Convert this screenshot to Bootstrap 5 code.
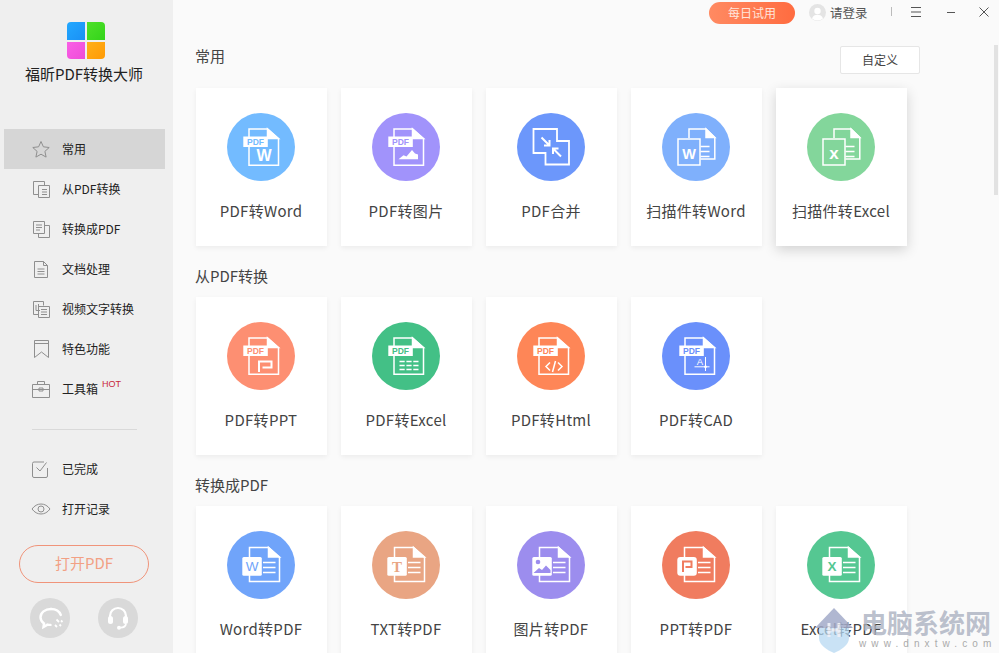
<!DOCTYPE html>
<html lang="zh-CN">
<head>
    <meta charset="UTF-8">
    <meta name="viewport" content="width=device-width, initial-scale=1.0">
    <link rel="stylesheet" href="https://cdn.jsdelivr.net/npm/bootstrap@5.3.3/dist/css/bootstrap.min.css">
    <title>福昕PDF转换大师</title>

    <style>
        html, body {
            height: 653px;
            overflow: hidden;
        }
        body {
            background: #fafafa;
            color: #333;
            font-family: "Noto Sans CJK SC", "Liberation Sans", sans-serif;
            position: relative;
        }
        /* sidebar */
        .side-panel {
            width: 173px;
            height: 653px;
            background: #efefef;
            flex: none;
        }
        .logo-grid {
            width: 38px;
            height: 37px;
            margin: 22px 0 0 67px;
            display: grid;
            grid-template-columns: 1fr 1fr;
            gap: 2px;
            border-radius: 4px;
            overflow: hidden;
        }
        .logo-a { background: linear-gradient(135deg, #22a8ff, #1a90f5); }
        .logo-b { background: linear-gradient(135deg, #4fe02a, #33d41a); }
        .logo-c { background: linear-gradient(135deg, #fa5fe6, #ee4cd8); }
        .logo-d { background: linear-gradient(135deg, #ffb01a, #ff9a05); }
        .app-title {
            font-size: 15px;
            line-height: 20px;
            margin-top: 5px;
            padding-right: 5px;
            color: #222;
            text-align: center;
        }
        .side-nav {
            margin-top: 45px;
            padding: 0 8px 0 4px;
        }
        .side-nav .nav-link {
            height: 40px;
            padding: 0 0 0 27px;
            display: flex;
            align-items: center;
            gap: 11px;
            color: #222;
            font-size: 12px;
            position: relative;
        }
        .side-nav .nav-link.active {
            background: #d6d6d6;
        }
        .side-icon {
            width: 20px;
            height: 20px;
            flex: none;
            fill: none;
            stroke: #8f8f8f;
            stroke-width: 1;
        }
        .hot-tag {
            position: absolute;
            left: 98px;
            top: 10px;
            font-size: 9px;
            line-height: 10px;
            color: #c8283c;
            font-family: "Liberation Sans", sans-serif;
        }
        .side-rule {
            margin: 20px 36px 19px 32px;
            border-top: 1px solid #d9d9d9;
            opacity: 1;
        }
        .open-btn {
            display: block;
            width: 130px;
            height: 38px;
            margin: 16px 0 0 19px;
            padding: 0 0 3px;
            border: 1px solid #f0947a;
            border-radius: 19px;
            background: transparent;
            color: #f2a084;
            font-size: 15px;
            line-height: 32px;
        }
        .round-tool {
            width: 40px;
            height: 40px;
            border-radius: 50%;
            background: #d9d9d9;
        }
        .round-row {
            margin: 15px 0 0 30px;
            gap: 28px;
        }
        /* main */
        .main-area {
            flex: 1;
            min-width: 0;
            padding-left: 22px;
        }
        .top-bar {
            height: 26px;
            padding-top: 2px;
            color: #555;
            font-size: 12.500px;
        }
        .trial-pill {
            width: 86px;
            height: 22px;
            margin-left: 514px;
            padding: 0;
            border: 0;
            border-radius: 11px;
            background: linear-gradient(90deg, #ff8a62, #ff6c40);
            color: #ffe6dc;
            font-size: 12px;
            line-height: 22px;
        }
        .avatar-dot {
            width: 17px;
            height: 17px;
            margin: 2px 0 0 14px;
        }
        .login-text {
            margin-left: 4px;
            width: 39px;
            line-height: 22px;
            white-space: nowrap;
        }
        .win-icon {
            width: 12px;
            height: 12px;
            margin-top: 4px;
            fill: none;
            stroke: #555;
            stroke-width: 1;
        }
        .win-menu { margin-left: 18px; }
        .win-min { margin-left: 23px; }
        .win-close { margin-left: 21px; }
        .bar-sep {
            width: 1px;
            height: 9px;
            margin: 5px 0 0 22px;
            background: #bbb;
        }
        .section-title {
            font-size: 15px;
            line-height: 20px;
            color: #444;
            margin: 20px 0 11px;
            font-weight: 400;
        }
        .first-head {
            height: 28px;
            margin-top: 20px;
            margin-bottom: 14px;
            width: 725px;
        }
        .first-head .section-title {
            margin: 0;
        }
        .custom-btn {
            width: 80px;
            height: 28px;
            padding: 0;
            background: #fff;
            border: 1px solid #e6e6e6;
            border-radius: 2px;
            color: #444;
            font-size: 12px;
            line-height: 26px;
        }
        .tool-row {
            gap: 14px;
            margin-left: 1px;
        }
        .tool-card {
            width: 131px;
            height: 158px;
            flex: none;
            padding-top: 25px;
            border: 0;
            border-radius: 0;
            background: #fff;
            box-shadow: 0 2px 5px rgba(0, 0, 0, .06);
            align-items: center;
        }
        .tool-card.hovered {
            box-shadow: 0 4px 12px rgba(0, 0, 0, .16);
        }
        .tool-disc {
            width: 68px;
            height: 68px;
            margin-right: 1px;
            border-radius: 50%;
            background: currentColor;
        }
        .tool-disc svg {
            display: block;
            fill: none;
            stroke: #fff;
            stroke-width: 1.5;
        }
        .tool-disc text {
            font-family: "Liberation Sans", sans-serif;
            font-weight: 700;
            stroke: none;
        }
        .tool-name {
            margin-top: 18px;
            padding-right: 1px;
            font-size: 15px;
            line-height: 24px;
            letter-spacing: .3px;
            color: #444;
            white-space: nowrap;
        }
        .c-a { color: #73bbff; }
        .c-b { color: #a193fb; }
        .c-c { color: #6c97fb; }
        .c-d { color: #7fb0fc; }
        .c-e { color: #83d69b; }
        .c-f { color: #fd8f72; }
        .c-g { color: #43c086; }
        .c-h { color: #fe8657; }
        .c-i { color: #6a90fb; }
        .c-j { color: #70a4fa; }
        .c-k { color: #e9a583; }
        .c-l { color: #9c8dee; }
        .c-m { color: #f07c5f; }
        .c-n { color: #55c792; }
        /* scrollbar and watermark lie over the content */
        .fake-scroll {
            position: absolute;
            left: 994px;
            top: 45px;
            width: 4px;
            height: 150px;
            background: #e2e2e2;
        }
        .wm-logo {
            position: absolute;
            left: 814px;
            top: 607px;
            opacity: .85;
        }
        .wm-name {
            position: absolute;
            left: 861px;
            top: 606px;
            font-size: 26px;
            line-height: 32px;
            font-weight: 700;
            color: rgba(170, 176, 192, .8);
            white-space: nowrap;
        }
        .wm-url {
            position: absolute;
            left: 859px;
            top: 637px;
            font-family: "Liberation Sans", sans-serif;
            font-size: 10px;
            line-height: 14px;
            letter-spacing: 5.100px;
            color: #aaa;
            white-space: nowrap;
        }
    </style>
</head>
<body>
    <!-- shared icon parts -->
    <svg width="0" height="0" class="position-absolute">
        <symbol id="doc-pdf" viewBox="0 0 68 68">
            <path d="M22 30V16h18.500l11 10v26.200H22V34" />
            <path d="M40.500 16v9.500h11z" fill="#fff" />
            <rect x="16.300" y="23.500" width="24.500" height="10.500" fill="#fff" stroke="none" />
        </symbol>
        <symbol id="doc-lines" viewBox="0 0 68 68">
            <path d="M22.500 26V16.500h19l11 10v24h-30V44" />
            <path d="M41.500 16.500v9.500h11z" fill="#fff" />
            <path d="M36 31.500h12.500M36 36.500h12.500M36 41.500h12.500" />
        </symbol>
        <symbol id="doc-scan" viewBox="0 0 68 68">
            <path d="M27 25V16h17l8.800 8.500V46H38.500" />
            <path d="M44 16v8.500h8.800z" fill="#fff" />
            <path d="M38.500 33.500h9M38.500 38.500h9M38.500 43.500h9" />
            <path d="M16 26h22v26H16z" />
        </symbol>
    </svg>

    <div class="d-flex">
        <aside class="side-panel">
            <div class="logo-grid">
                <span class="logo-a"></span><span class="logo-b"></span>
                <span class="logo-c"></span><span class="logo-d"></span>
            </div>
            <div class="app-title">福昕PDF转换大师</div>

            <nav class="nav flex-column side-nav">
                <a class="nav-link active" href="#">
                    <svg class="side-icon" viewBox="0 0 20 20"><path d="M10 2.500l2.400 5.300 5.800.7-4.300 3.900 1.200 5.700-5.100-2.900-5.100 2.900 1.200-5.700-4.300-3.900 5.800-.7z" /></svg>
                    常用
                </a>
                <a class="nav-link" href="#">
                    <svg class="side-icon" viewBox="0 0 20 20"><path d="M7 15.500H2.500v-13h11v4M7.500 6.500h11v12h-11zM11 10.500h5M11 13h5M11 15.500h5" /></svg>
                    从PDF转换
                </a>
                <a class="nav-link" href="#">
                    <svg class="side-icon" viewBox="0 0 20 20"><path d="M2.500 2.500h11v12h-11zM5 6h6M5 8.500h6M5 11h4M13.500 6.500h5v12h-11v-4" /></svg>
                    转换成PDF
                </a>
                <a class="nav-link" href="#">
                    <svg class="side-icon" viewBox="0 0 20 20"><path d="M3.500 2.500h9l4 4v12h-13zM12.500 2.500v4h4M6.500 10h7M6.500 12.500h7M6.500 15h7" /></svg>
                    文档处理
                </a>
                <a class="nav-link" href="#">
                    <svg class="side-icon" viewBox="0 0 20 20"><path d="M7.500 15.500h-5v-13h10v4M7.500 7.500h11v11h-11zM5 6v5.500h4M7.500 5v3M10 10.500h6M10 13h6M10 15.500h6" /></svg>
                    视频文字转换
                </a>
                <a class="nav-link" href="#">
                    <svg class="side-icon" viewBox="0 0 20 20"><path d="M3.500 1.500h14v17L10.500 13l-7 5.500zM3.500 4.500h14" /></svg>
                    特色功能
                </a>
                <a class="nav-link" href="#">
                    <svg class="side-icon" viewBox="0 0 20 20"><path d="M1.500 5.500h17v13h-17zM1.500 10.500h17M6.500 5.500v-3h7v3M8 9h4v3H8z" /></svg>
                    工具箱
                    <span class="hot-tag">HOT</span>
                </a>
            </nav>

            <hr class="side-rule">

            <nav class="nav flex-column side-nav mt-0">
                <a class="nav-link" href="#">
                    <svg class="side-icon" viewBox="0 0 20 20"><path d="M16.500 9v8a1.500 1.500 0 0 1-1.500 1.500H3A1.500 1.500 0 0 1 1.500 17V4.500A1.500 1.500 0 0 1 3 3h10M5.500 8.500l3.500 3.500L15.500 3.500" /></svg>
                    已完成
                </a>
                <a class="nav-link" href="#">
                    <svg class="side-icon" viewBox="0 0 20 20"><path d="M1 10c2.500-3.400 5.500-5 9-5s6.500 1.600 9 5c-2.500 3.400-5.500 5-9 5s-6.500-1.600-9-5z" /><circle cx="10" cy="10" r="3" /></svg>
                    打开记录
                </a>
            </nav>

            <button type="button" class="btn open-btn">打开PDF</button>

            <div class="d-flex round-row">
                <div class="round-tool">
                    <svg width="40" height="40" viewBox="0 0 40 40"><path d="M21 11c-6 0-10.500 3.500-10.500 8.200 0 2.600 1.400 4.800 3.500 6.200l-.5 3.600 4-2.400c1 .2 2 .3 3 .3" fill="none" stroke="#fff" stroke-width="2.400" stroke-linecap="round" /><path d="M21 11c5 0 8.500 2.600 9.800 6" fill="none" stroke="#fff" stroke-width="2.400" stroke-linecap="round" /><path d="M26.500 21.500l2.500 2.500M31 22.500l1.500 1.500M25 27l2 2M29.500 26.500l1.500 1.500" stroke="#fff" stroke-width="1.800" /></svg>
                </div>
                <div class="round-tool">
                    <svg width="40" height="40" viewBox="0 0 40 40"><path d="M12 21v-3a8 8 0 0 1 16 0v3" fill="none" stroke="#fff" stroke-width="2.200" /><rect x="10" y="18" width="5" height="8" rx="2.500" fill="#fff" /><rect x="25" y="18" width="5" height="8" rx="2.500" fill="#fff" /><path d="M28 26c-.5 2.500-2.500 3.500-5.500 3.700" fill="none" stroke="#fff" stroke-width="1.800" /><circle cx="21" cy="29.800" r="2" fill="#fff" /></svg>
                </div>
            </div>
        </aside>

        <main class="main-area">
            <div class="d-flex top-bar">
                <button type="button" class="btn trial-pill">每日试用</button>
                <svg class="avatar-dot" viewBox="0 0 17 17">
                    <circle cx="8.500" cy="8.500" r="8.500" fill="#e4e4e4" />
                    <circle cx="8.500" cy="7" r="3.200" fill="#fff" />
                    <path d="M3 14.500c1-3 3-3.800 5.500-3.800s4.500.8 5.500 3.800a8.500 8.500 0 0 1-11 0z" fill="#fff" />
                </svg>
                <span class="login-text">请登录</span>
                <span class="bar-sep"></span>
                <svg class="win-icon win-menu" viewBox="0 0 12 12"><path d="M1 1.500h10M1 6h10M1 10.500h10" /></svg>
                <svg class="win-icon win-min" viewBox="0 0 12 12"><path d="M2 6.500h8" /></svg>
                <svg class="win-icon win-close" viewBox="0 0 12 12"><path d="M1.500 1.500l9 9M10.500 1.500l-9 9" /></svg>
            </div>

            <div class="d-flex justify-content-between first-head">
                <h2 class="section-title">常用</h2>
                <button type="button" class="btn custom-btn">自定义</button>
            </div>
            <div class="d-flex tool-row">
                <div class="card tool-card">
                    <div class="tool-disc c-a"><svg width="68" height="68" viewBox="0 0 68 68"><use href="#doc-pdf" width="68" height="68" /><text x="28.500" y="31.800" font-size="8.500" text-anchor="middle" fill="currentColor">PDF</text><text x="37" y="47.500" font-size="16" text-anchor="middle" fill="#fff">W</text></svg></div>
                    <div class="tool-name">PDF转Word</div>
                </div>
                <div class="card tool-card">
                    <div class="tool-disc c-b"><svg width="68" height="68" viewBox="0 0 68 68"><use href="#doc-pdf" width="68" height="68" /><text x="28.500" y="31.800" font-size="8.500" text-anchor="middle" fill="currentColor">PDF</text><path d="M26.500 46.200l5-4 3 1.300 5.500-6.500 3 3.500 3 1v4.700z" fill="#fff" stroke="none" /></svg></div>
                    <div class="tool-name">PDF转图片</div>
                </div>
                <div class="card tool-card">
                    <div class="tool-disc c-c"><svg width="68" height="68" viewBox="0 0 68 68"><path d="M16.500 16H40v12h12v23.500H28.500V40h-12z" stroke-width="1.800" /><path d="M24.500 24.500l7.500 7.500M32.500 27v5.500H27M44 43.500L36.500 36M36 41v-5.500h5.500" stroke-width="2" /></svg></div>
                    <div class="tool-name">PDF合并</div>
                </div>
                <div class="card tool-card">
                    <div class="tool-disc c-d"><svg width="68" height="68" viewBox="0 0 68 68"><use href="#doc-scan" width="68" height="68" /><text x="27" y="46" font-size="14.500" text-anchor="middle" fill="#fff">W</text></svg></div>
                    <div class="tool-name">扫描件转Word</div>
                </div>
                <div class="card tool-card hovered">
                    <div class="tool-disc c-e"><svg width="68" height="68" viewBox="0 0 68 68"><use href="#doc-scan" width="68" height="68" /><text x="27" y="46" font-size="17" text-anchor="middle" fill="#fff">x</text></svg></div>
                    <div class="tool-name">扫描件转Excel</div>
                </div>
            </div>

            <h2 class="section-title">从PDF转换</h2>
            <div class="d-flex tool-row">
                <div class="card tool-card">
                    <div class="tool-disc c-f"><svg width="68" height="68" viewBox="0 0 68 68"><use href="#doc-pdf" width="68" height="68" /><text x="28.500" y="31.800" font-size="8.500" text-anchor="middle" fill="currentColor">PDF</text><path d="M32 50V39.500h12.500v6H35.500" stroke-width="2" /></svg></div>
                    <div class="tool-name">PDF转PPT</div>
                </div>
                <div class="card tool-card">
                    <div class="tool-disc c-g"><svg width="68" height="68" viewBox="0 0 68 68"><use href="#doc-pdf" width="68" height="68" /><text x="28.500" y="31.800" font-size="8.500" text-anchor="middle" fill="currentColor">PDF</text><path d="M27.500 39.500h19M27.500 43.500h19M27.500 47.500h19" stroke-width="1.700" stroke-dasharray="5.200 1.700" /></svg></div>
                    <div class="tool-name">PDF转Excel</div>
                </div>
                <div class="card tool-card">
                    <div class="tool-disc c-h"><svg width="68" height="68" viewBox="0 0 68 68"><use href="#doc-pdf" width="68" height="68" /><text x="28.500" y="31.800" font-size="8.500" text-anchor="middle" fill="currentColor">PDF</text><path d="M33 40.500l-4 4 4 4M41 40.500l4 4-4 4M38.500 39l-3 11" /></svg></div>
                    <div class="tool-name">PDF转Html</div>
                </div>
                <div class="card tool-card">
                    <div class="tool-disc c-i"><svg width="68" height="68" viewBox="0 0 68 68"><use href="#doc-pdf" x="1" width="68" height="68" /><text x="29.500" y="31.800" font-size="8.500" text-anchor="middle" fill="currentColor">PDF</text><text x="38" y="43" font-size="9.500" text-anchor="middle" fill="#fff" style="font-weight:400">A</text><path d="M32.500 44.800h15M43.500 35v14" stroke-width="1" /><circle cx="43.500" cy="44.800" r="1.400" fill="#fff" stroke="none" /></svg></div>
                    <div class="tool-name">PDF转CAD</div>
                </div>
            </div>

            <h2 class="section-title">转换成PDF</h2>
            <div class="d-flex tool-row">
                <div class="card tool-card">
                    <div class="tool-disc c-j"><svg width="68" height="68" viewBox="0 0 68 68"><use href="#doc-lines" width="68" height="68" /><rect x="15.300" y="26" width="19.500" height="18.700" rx="1.500" fill="#fff" stroke="none" /><text x="25" y="40" font-size="13.500" text-anchor="middle" fill="currentColor" style="font-weight:400">W</text></svg></div>
                    <div class="tool-name">Word转PDF</div>
                </div>
                <div class="card tool-card">
                    <div class="tool-disc c-k"><svg width="68" height="68" viewBox="0 0 68 68"><use href="#doc-lines" width="68" height="68" /><rect x="15.300" y="26" width="19.500" height="18.700" rx="1.500" fill="#fff" stroke="none" /><text x="25" y="40.500" font-size="15" text-anchor="middle" fill="currentColor" style="font-family:'Liberation Serif',serif">T</text></svg></div>
                    <div class="tool-name">TXT转PDF</div>
                </div>
                <div class="card tool-card">
                    <div class="tool-disc c-l"><svg width="68" height="68" viewBox="0 0 68 68"><use href="#doc-lines" width="68" height="68" /><rect x="15.300" y="26" width="19.500" height="18.700" rx="1.500" fill="#fff" stroke="none" /><circle cx="21" cy="31" r="2.300" fill="currentColor" stroke="none" /><path d="M16.500 42l5.500-5 3 2 4-4.500 4.500 4.500v3z" fill="currentColor" stroke="none" /></svg></div>
                    <div class="tool-name">图片转PDF</div>
                </div>
                <div class="card tool-card">
                    <div class="tool-disc c-m"><svg width="68" height="68" viewBox="0 0 68 68"><use href="#doc-lines" width="68" height="68" /><rect x="15.300" y="26" width="19.500" height="18.700" rx="3" fill="#fff" stroke="none" /><path d="M21 41V30.500h8.500v5.500H23.500" stroke="currentColor" stroke-width="2" /></svg></div>
                    <div class="tool-name">PPT转PDF</div>
                </div>
                <div class="card tool-card">
                    <div class="tool-disc c-n"><svg width="68" height="68" viewBox="0 0 68 68"><use href="#doc-lines" width="68" height="68" /><rect x="15.300" y="26" width="19.500" height="18.700" rx="1.500" fill="#fff" stroke="none" /><text x="25" y="40" font-size="13.500" text-anchor="middle" fill="currentColor">X</text></svg></div>
                    <div class="tool-name">Excel转PDF</div>
                </div>
            </div>
        </main>
    </div>

    <div class="fake-scroll"></div>

    <svg class="wm-logo" width="40" height="46" viewBox="0 0 40 46">
        <path d="M1 21L20 1l19 20z" fill="#a3abc9" />
        <path d="M5 21h30v10c0 7-8 12-15 15C13 43 5 38 5 31z" fill="#b5d8f2" opacity=".85" />
        <path d="M15 16v14M25 16v14M15 23h10" stroke="#e8ecf5" stroke-width="3" fill="none" />
    </svg>
    <div class="wm-name">电脑系统网</div>
    <div class="wm-url">www.dnxtw.com</div>

    <script src="https://cdn.jsdelivr.net/npm/bootstrap@5.3.3/dist/js/bootstrap.bundle.min.js"></script>
</body>
</html>
